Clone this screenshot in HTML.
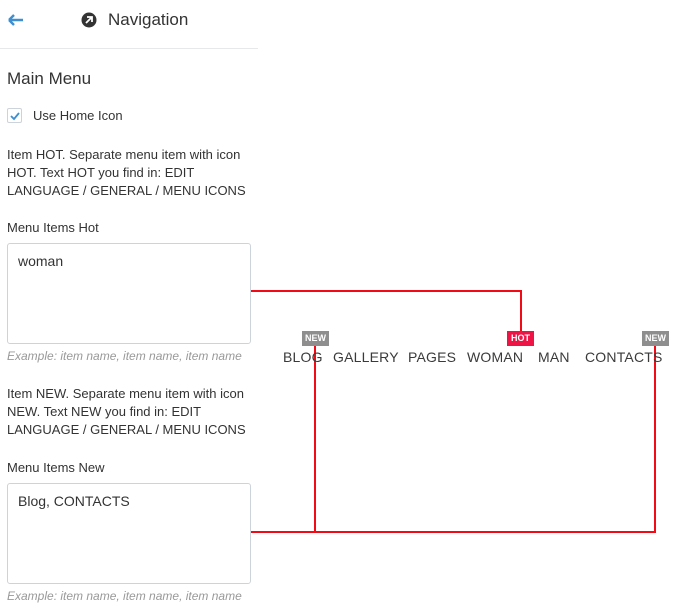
<!DOCTYPE html>
<html><head><style>
*{margin:0;padding:0;box-sizing:border-box}
body{width:677px;height:610px;background:#fff;font-family:"Liberation Sans",sans-serif;color:#333;position:relative;overflow:hidden}
.a{position:absolute;white-space:nowrap}
.t{font-size:13px;line-height:18px}
.ta{position:absolute;left:7px;width:244px;height:101px;border:1px solid #ccd3da;border-radius:3px;font-size:14px;padding:9px 10px}
.ex{font-size:12px;color:#999;font-style:italic}
.r{position:absolute;background:#f20a14}
.b{position:absolute;top:331px;height:15px;width:27px;font-size:9px;font-weight:bold;color:#fff;text-align:center;line-height:15px}
.m{position:absolute;top:349px;font-size:14px;letter-spacing:0.2px;color:#3a3a3a;white-space:nowrap}
</style></head><body>
<svg class="a" style="left:7px;top:13px" width="18" height="14"><path d="M2 7H16M2 7L7 2M2 7L7 12" stroke="#3d8fd1" stroke-width="2.4" fill="none"/></svg>
<svg class="a" style="left:81px;top:12px" width="16" height="16"><circle cx="8" cy="8" r="7.5" fill="#333"/><path d="M5 11L11 5M6 5H11V10" stroke="#fff" stroke-width="1.8" fill="none"/></svg>
<div class="a" style="left:108px;top:10px;font-size:17px">Navigation</div>
<div class="a" style="left:0;top:48px;width:258px;height:1px;background:#e6e8ea"></div>
<div class="a" style="left:7px;top:69px;font-size:17px">Main Menu</div>
<div class="a" style="left:7px;top:108px;width:15px;height:15px;border:1px solid #ccd3da;border-radius:2px"></div>
<svg class="a" style="left:9px;top:110px" width="12" height="12"><path d="M2 6L5 9L10 3" stroke="#3d8fd1" stroke-width="1.8" fill="none"/></svg>
<div class="a t" style="left:33px;top:107px">Use Home Icon</div>
<div class="a t" style="left:7px;top:146px">Item HOT. Separate menu item with icon<br>HOT. Text HOT you find in: EDIT<br>LANGUAGE / GENERAL / MENU ICONS</div>
<div class="a t" style="left:7px;top:219px">Menu Items Hot</div>
<div class="ta" style="top:243px">woman</div>
<div class="a ex" style="left:7px;top:349px">Example: item name, item name, item name</div>
<div class="a t" style="left:7px;top:385px">Item NEW. Separate menu item with icon<br>NEW. Text NEW you find in: EDIT<br>LANGUAGE / GENERAL / MENU ICONS</div>
<div class="a t" style="left:7px;top:459px">Menu Items New</div>
<div class="ta" style="top:483px">Blog, CONTACTS</div>
<div class="a ex" style="left:7px;top:589px">Example: item name, item name, item name</div>

<div class="r" style="left:251px;top:290px;width:271px;height:2px"></div>
<div class="r" style="left:520px;top:290px;width:2px;height:41px"></div>
<div class="r" style="left:314px;top:346px;width:2px;height:187px"></div>
<div class="r" style="left:654px;top:346px;width:2px;height:187px"></div>
<div class="r" style="left:251px;top:531px;width:405px;height:2px"></div>

<div class="m" style="left:283px">BLOG</div>
<div class="m" style="left:333px">GALLERY</div>
<div class="m" style="left:408px">PAGES</div>
<div class="m" style="left:467px">WOMAN</div>
<div class="m" style="left:538px">MAN</div>
<div class="m" style="left:585px">CONTACTS</div>
<div class="b" style="left:302px;background:#8e8e8e">NEW</div>
<div class="b" style="left:507px;background:#ee1446">HOT</div>
<div class="b" style="left:642px;background:#8e8e8e">NEW</div>
</body></html>
